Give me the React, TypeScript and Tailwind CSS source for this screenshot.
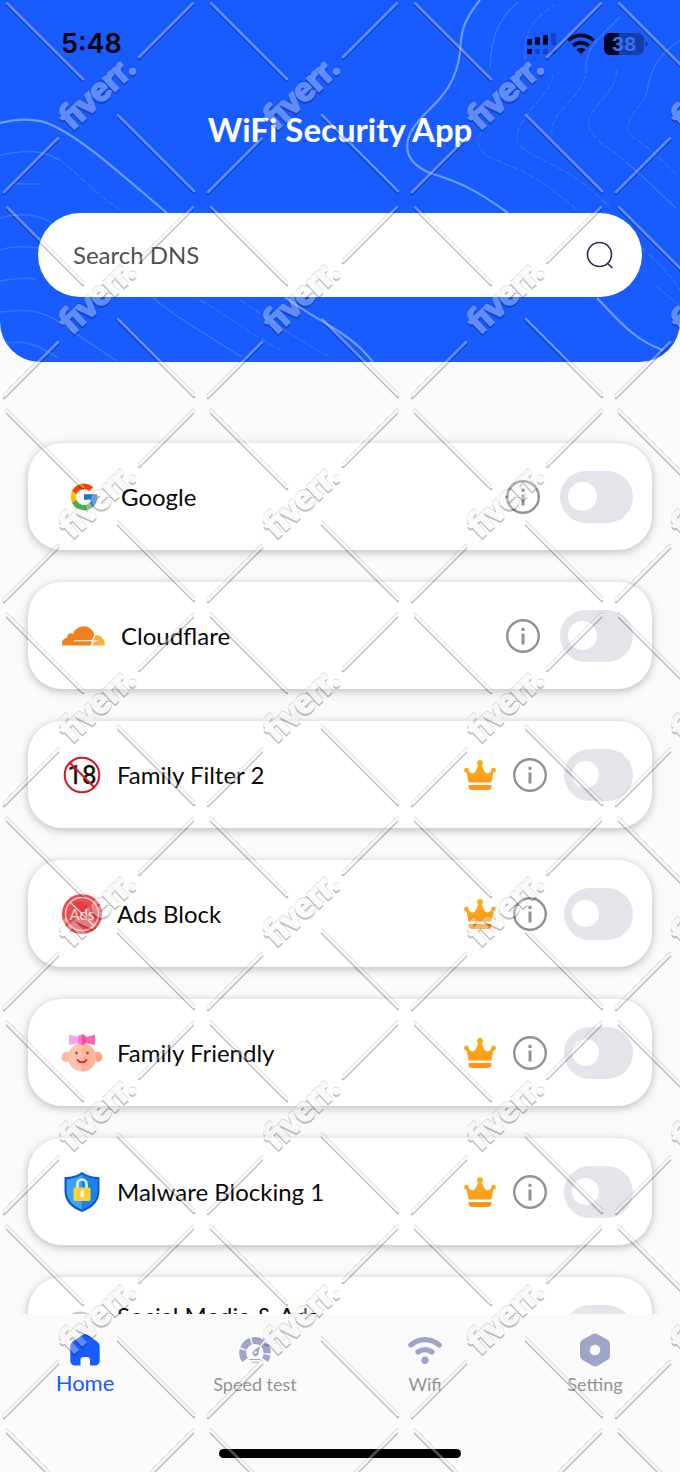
import type { ReactNode } from "react";
import { FcGoogle } from "react-icons/fc";

type Server = { id: string; name: string; icon: ReactNode; premium?: boolean };

function CloudflareIcon() {
  return (
    <svg viewBox="0 0 43 20" className="h-5 w-[43px]" aria-hidden="true">
      <path
        fill="#F38020"
        d="M0 19.500v-2.500c0-3 2.400-5 5.200-5-.5-3.600 3.200-5.800 6-4C12.500 3.500 17 .3 22 .3c5.200 0 9.300 3.600 10.300 8.400l-2.800 7-.8 3.800H0Z"
      />
      <path fill="#FAAE40" d="M33.500 9.200c5.500-.3 9.300 4 9.300 9.100l-.2 1.200H29.800l2-7.300 1.700-3Z" />
      <path fill="none" stroke="#fff" strokeWidth="1.100" d="M12 14.800h16.500c2 0 2.800-1.300 3.300-3M30 20l1.200-3.800c.3-1 .8-1.500 2-1.500h3" />
    </svg>
  );
}

function EighteenIcon() {
  return (
    <svg viewBox="0 0 40 40" className="size-10" aria-hidden="true">
      <text x="20" y="29" textAnchor="middle" fontSize="26" fontFamily="Roboto, sans-serif" fill="#111" stroke="#111" strokeWidth=".4">
        18
      </text>
      <circle cx="20" cy="20" r="17.300" fill="none" stroke="#D9141E" strokeWidth="2" />
      <path d="M8 8l24 24" stroke="#D9141E" strokeWidth="2" />
    </svg>
  );
}

function AdsIcon() {
  return (
    <svg viewBox="0 0 40 40" className="size-10" aria-hidden="true">
      <circle cx="20" cy="20" r="20" fill="#EC4C4F" />
      <path d="M11 8l8-1 6 4 8 7v12l-6 5-14-15Z" fill="#D9383D" opacity=".6" />
      <circle cx="20" cy="20" r="16.500" fill="none" stroke="#F9C9CA" strokeWidth="1.500" />
      <text x="20" y="25.500" textAnchor="middle" fontSize="15" fontFamily="Lato, sans-serif" fill="#FBDCDC">
        Ads
      </text>
      <path d="M8.500 8.500l23 23" stroke="#F9C9CA" strokeWidth="1.500" />
    </svg>
  );
}

function BabyIcon() {
  return (
    <svg viewBox="0 0 42 38" className="h-[38px] w-[42px] shrink-0" aria-hidden="true">
      <circle cx="5.500" cy="23" r="5" fill="#FFB69C" />
      <circle cx="36.500" cy="23" r="5" fill="#F7A488" />
      <circle cx="21" cy="23.500" r="14" fill="#FFC2AC" />
      <path d="M21 9.500a14 14 0 0 1 0 28Z" fill="#FDB49B" />
      <path d="M8 .5l10 3h3v5l-3 .5-10 2Z" fill="#F8A3EE" />
      <path d="M34 .5l-10 3h-3v5l3 .5 10 2Z" fill="#FF63AE" />
      <path d="M17 3.500c0-2 2-3 4-3V11c-2 0-4-1-4-3Z" fill="#F377D2" />
      <path d="M25 3.500c0-2-2-3-4-3V11c2 0 4-1 4-3Z" fill="#F54C9B" />
      <circle cx="15.500" cy="19" r="1.400" fill="#9C5B33" />
      <circle cx="26.500" cy="19" r="1.400" fill="#9C5B33" />
      <path d="M16.500 26c2 3 7 3 9 0" fill="none" stroke="#EE2430" strokeWidth="2" strokeLinecap="round" />
    </svg>
  );
}

function ShieldIcon() {
  return (
    <svg viewBox="0 0 40 40" className="size-10" aria-hidden="true">
      <path d="M20 0c5 3.800 11 4.800 17.500 5.200V19c0 10-6.500 17-17.500 21C9 36 2.500 29 2.500 19V5.200C9 4.800 15 3.800 20 0Z" fill="#0B57D0" />
      <path d="M20 2.500c4.500 3 9.500 4.200 15.300 4.700V19c0 8.500-5.500 14.700-15.300 18.500C10.200 33.700 4.700 27.500 4.700 19V7.200C10.500 6.700 15.500 5.500 20 2.500Z" fill="#3FA2F7" />
      <path d="M20 2.500c4.500 3 9.500 4.200 15.300 4.700V19c0 8.500-5.500 14.700-15.300 18.500Z" fill="#1E80EA" />
      <path d="M15.500 17v-5a4.500 4.500 0 0 1 9 0v5" fill="none" stroke="#E8F1FC" strokeWidth="2.600" />
      <rect x="11.500" y="15.500" width="17" height="13.500" rx="1.500" fill="#FFD232" />
      <circle cx="20" cy="20.500" r="2" fill="#fff" />
      <path d="M19 21h2l.5 4h-3Z" fill="#fff" />
    </svg>
  );
}

function SocialIcon() {
  return (
    <svg viewBox="0 0 40 40" className="size-10" aria-hidden="true">
      <circle cx="18" cy="20" r="18" fill="none" stroke="#C9C9CC" strokeWidth="3" />
    </svg>
  );
}

function CrownIcon() {
  return (
    <svg viewBox="0 0 32 30" className="h-[30px] w-8 shrink-0" role="img" aria-label="Premium">
      <defs>
        <linearGradient id="crown" x1="0" y1="0" x2="0" y2="1">
          <stop offset="0" stopColor="#FDB10F" />
          <stop offset="1" stopColor="#FC9A1C" />
        </linearGradient>
      </defs>
      <path
        fill="url(#crown)"
        d="M4.600 22.500 2.600 12.400A2.300 2.300 0 1 1 4.700 10.500c2 4 5.500 4 7.300 0l2.300-5a3 3 0 1 1 3.400 0L20 10.500c1.800 4 5.300 4 7.300 0a2.300 2.300 0 1 1 2.100 1.900L27.400 22.500Z"
      />
      <path fill="#FB961D" d="M4.600 25h22.800v1.500a3.500 3.500 0 0 1-3.500 3.500H8.100a3.500 3.500 0 0 1-3.500-3.500Z" />
    </svg>
  );
}

function InfoIcon() {
  return (
    <svg viewBox="0 0 34 34" className="size-[34px]" aria-hidden="true">
      <circle cx="17" cy="17" r="15.800" fill="none" stroke="#929292" strokeWidth="2.400" />
      <path d="M17 14.500v11M17 8.700v3.400" stroke="#929292" strokeWidth="3" />
    </svg>
  );
}

const SERVERS: Server[] = [
  { id: "google", name: "Google", icon: <FcGoogle className="size-8" aria-hidden="true" /> },
  { id: "cloudflare", name: "Cloudflare", icon: <CloudflareIcon /> },
  { id: "family-filter", name: "Family Filter 2", icon: <EighteenIcon />, premium: true },
  { id: "ads-block", name: "Ads Block", icon: <AdsIcon />, premium: true },
  { id: "family-friendly", name: "Family Friendly", icon: <BabyIcon />, premium: true },
  { id: "malware", name: "Malware Blocking 1", icon: <ShieldIcon />, premium: true },
  { id: "social", name: "Social Media & Ads Blocking", icon: <SocialIcon />, premium: true },
];

function ServerCard({ server }: { server: Server }) {
  const { id, name, icon, premium } = server;
  return (
    <li className="flex h-[107px] shrink-0 items-center rounded-[34px] bg-white pr-[19px] pl-[34px] shadow-[0_2px_10px_rgba(0,0,0,0.26)]">
      <span className={premium ? "flex w-10 shrink-0 justify-center" : "flex w-[43px] shrink-0 justify-center"}>{icon}</span>
      <label
        htmlFor={id}
        className={premium ? "ml-[15px] w-[230px] text-2xl leading-[30px]" : "ml-4 w-[230px] text-2xl leading-[30px]"}
      >
        {name}
      </label>
      <div className={premium ? "ml-auto flex items-center gap-[17px]" : "ml-auto flex items-center gap-5"}>
        {premium && <CrownIcon />}
        <button type="button" aria-label={`About ${name}`}>
          <InfoIcon />
        </button>
        <input
          id={id}
          type="checkbox"
          role="switch"
          className={
            premium
              ? "flex h-[52px] w-[69px] appearance-none items-center rounded-full bg-[#E5E4EA] pl-2 before:size-[27px] before:rounded-full before:bg-white checked:bg-[#185BFF]"
              : "flex h-[52px] w-[73px] appearance-none items-center rounded-full bg-[#E5E4EA] pl-2 before:size-[29px] before:rounded-full before:bg-white checked:bg-[#185BFF]"
          }
        />
      </div>
    </li>
  );
}

/** Topographic lines behind the header. */
function Contours() {
  return (
    <svg
      viewBox="0 0 680 362"
      preserveAspectRatio="none"
      className="absolute inset-0 size-full"
      fill="none"
      stroke="#8FB0FF"
      aria-hidden="true"
    >
      <g strokeWidth="2.200" opacity=".75">
        <path d="M0 123c16-4 36-6 54 3 32 16 62 44 113 87M285 297c18 14 40 25 56 36 15 10 22 17 32 29" />
        <path d="M480 0c-18 22-19 34-20 52-4 36-24 50-38 65-19 20-23 43 8 56 29 9 45 16 78 40M597 298c21 22 37 42 66 52" />
      </g>
      <g strokeWidth="1.500" opacity=".3">
        <path d="M0 155c25-5 40-6 60 5M0 312c30-4 45-2 70 18l47 31M0 344c22-4 35-2 58 14M152 297c25 21 55 38 90 60M15 184h25M0 218c20-6 40-3 52 5M0 250c15-5 25-3 40-2M0 281c12-2 24-4 36-2" />
        <path d="M518 2c-20 18-27 34-28 66M680 40c-30 20-30 40-34 55M628 164c16 12 30 28 48 44M586 67c0-20 14-30 34-50" />
      </g>
      <g strokeWidth="1.500" opacity=".22" strokeDasharray="7 2">
        <path d="M60 160c20 15 40 38 62 51M200 300c28 16 52 35 80 50M240 300c30 20 55 38 88 56" />
        <path d="M482 132c-12 22 12 26 26 33 26 10 45 24 70 46M553 75c-4 24-45 48-34 70 22 19 54 22 90 62M586 67c0 32-35 40-34 66M617 70c-2 28-36 40-27 60 10 16 24 20 38 34M525 60c0-30 6-40 30-55M646 95c-6 14-24 26-16 40 18 12 34 26 46 40M642 248c14 12 28 26 38 42M656 286l24 20" />
      </g>
    </svg>
  );
}

function StatusBar() {
  return (
    <div className="flex h-[87px] items-center justify-between pr-8 pl-[61px] text-black">
      <time className="font-[Inter,sans-serif] text-[27px] leading-8 font-semibold">5:48</time>
      <svg viewBox="0 0 121 24" className="h-6 w-[121px]" aria-hidden="true">
        <g fill="#020824">
          <rect y="7" width="5" height="6" rx="1" />
          <rect x="8" y="5" width="5" height="8" rx="1" />
          <rect x="16" y="3" width="5" height="10" rx="1" />
          <rect y="17" width="5" height="5" rx="1" />
          <g opacity=".25">
            <rect x="24" y="1" width="5" height="12" rx="1" />
            <rect x="8" y="17" width="5" height="5" rx="1" />
            <rect x="16" y="17" width="5" height="5" rx="1" />
            <rect x="24" y="17" width="5" height="5" rx="1" />
          </g>
        </g>
        <g fill="none" stroke="#020824" strokeWidth="3.800">
          <path d="M41.500 8.500a18 18 0 0 1 25 0" />
          <path d="M46.200 13.800a11.300 11.300 0 0 1 15.600 0" />
        </g>
        <path d="M49.500 17.500a7 7 0 0 1 9 0L54 22Z" fill="#020824" />
        <rect x="77" y="1" width="40" height="22" rx="6" fill="#143FA8" />
        <path d="M92 1v22h-9a6 6 0 0 1-6-6V7a6 6 0 0 1 6-6Z" fill="#020824" />
        <path d="M118.500 9c3 1 3 5 0 6Z" fill="#143FA8" />
        <text x="97" y="18.500" textAnchor="middle" fontSize="19" fontWeight="700" fontFamily="Inter, sans-serif" fill="#3C70F0">
          38
        </text>
      </svg>
    </div>
  );
}

function HomeIcon() {
  return (
    <svg viewBox="0 0 30 32" className="h-8 w-[30px]" aria-hidden="true">
      <path
        fill="#185BFF"
        d="M12 1.200a5.500 5.500 0 0 1 6 0l9.300 6.600A5.500 5.500 0 0 1 29.700 12.500V27a4.500 4.500 0 0 1-4.500 4.500H20V26a3 3 0 0 0-3-3h-3.500a3 3 0 0 0-3 3v5.500H4.800A4.500 4.500 0 0 1 .3 27V12.500a5.500 5.500 0 0 1 2.400-4.700Z"
      />
    </svg>
  );
}

function GaugeIcon() {
  return (
    <svg viewBox="0 0 32 32" className="size-8" aria-hidden="true">
      <path
        d="M6 26a12.300 12.300 0 1 1 20 0"
        fill="none"
        stroke="#9EA5C9"
        strokeWidth="7"
        strokeDasharray="10.500 1.500"
      />
      <path d="M21 12l-1.500 7.500a3 3 0 1 1-5-2.500Z" fill="#9EA5C9" />
      <circle cx="16.500" cy="18.500" r="1.300" fill="#FAFAFA" />
      <path d="M10.500 25.500h11M12.500 28.200h7" stroke="#9EA5C9" strokeWidth="1" />
    </svg>
  );
}

function WifiIcon() {
  return (
    <svg viewBox="0 0 34 28" className="h-7 w-[34px]" aria-hidden="true">
      <g fill="none" stroke="#9EA5C9" strokeWidth="5.200" strokeLinecap="round">
        <path d="M2.800 9c8.300-7.300 20.100-7.300 28.400 0" />
        <path d="M10 16c4.300-3 9.700-3 14 0" />
      </g>
      <circle cx="17" cy="24.200" r="3.700" fill="#9EA5C9" />
    </svg>
  );
}

function SettingIcon() {
  return (
    <svg viewBox="0 0 30 34" className="h-[34px] w-[30px]" aria-hidden="true">
      <path
        fill="#9EA5C9"
        fillRule="evenodd"
        d="M12.500 1.200a5 5 0 0 1 5 0l10 5.600A5 5 0 0 1 30 11.200v11.600a5 5 0 0 1-2.500 4.300l-10 5.700a5 5 0 0 1-5 0l-10-5.700A5 5 0 0 1 0 22.800V11.200a5 5 0 0 1 2.500-4.400ZM15 11.700a5.300 5.300 0 1 0 0 10.600 5.300 5.300 0 0 0 0-10.600Z"
      />
    </svg>
  );
}

const TABS = [
  { label: "Home", icon: <HomeIcon />, active: true },
  { label: "Speed test", icon: <GaugeIcon />, active: false },
  { label: "Wifi", icon: <WifiIcon />, active: false },
  { label: "Setting", icon: <SettingIcon />, active: false },
];

function TabBar() {
  return (
    <nav className="flex h-[158px] shrink-0 flex-col items-center justify-between bg-[#FAFAFA] pt-[19px] pb-3.5">
      <div className="grid w-full grid-cols-4">
        {TABS.map((tab) => (
          <a key={tab.label} href="#" className="flex flex-col items-center gap-[3px]">
            <span className="flex h-[34px] items-center">{tab.icon}</span>
            <span className={tab.active ? "text-[22px] leading-[26px] text-[#185BFF]" : "text-lg leading-7 text-[#949494]"}>
              {tab.label}
            </span>
          </a>
        ))}
      </div>
      <div className="h-[9px] w-[242px] rounded-full bg-black" />
    </nav>
  );
}

/** Repeating embossed mark over the whole screen; the shadow is cut out under the mark itself. */
function Watermark() {
  return (
    <svg className="pointer-events-none absolute inset-0 size-full" aria-hidden="true">
      <defs>
        <g id="mark" fill="currentColor" stroke="currentColor" strokeLinecap="round">
          <path strokeWidth="2.600" d="M7 3l76 76M139 57l54-54M4 192l54-54M118 115l76 76" />
          <text transform="translate(72 131) rotate(-43)" fontFamily="Lato, sans-serif" fontWeight="900" fontSize="34" strokeWidth="2">
            fiverr.
          </text>
        </g>
        <mask id="cut" maskUnits="userSpaceOnUse" x="0" y="0" width="204" height="204">
          <rect width="204" height="204" fill="#fff" />
          <use href="#mark" color="#000" />
        </mask>
        <pattern id="tile" width="204" height="204" patternUnits="userSpaceOnUse">
          <g mask="url(#cut)">
            <use href="#mark" y="2" color="#000" opacity=".26" />
            <use href="#mark" y="-1" color="#000" opacity=".16" />
          </g>
          <use href="#mark" color="#F0F0F0" opacity=".33" />
        </pattern>
      </defs>
      <rect width="100%" height="100%" fill="url(#tile)" />
    </svg>
  );
}

export default function App() {
  return (
    <div className="relative flex h-screen flex-col overflow-hidden bg-[#FAFAFA] font-[Lato,sans-serif] text-[#0A0A0A]">
      <header className="relative shrink-0 overflow-hidden rounded-b-[40px] bg-[#185BFF] pb-[65px]">
        <Contours />
        <div className="relative">
          <StatusBar />
          <h1 className="mt-5 text-center text-[33px] leading-[44px] font-bold text-white">WiFi Security App</h1>
          <form className="mx-[38px] mt-[62px] flex h-[84px] items-center rounded-full bg-white pr-7 pl-[35px]">
            <input
              type="search"
              aria-label="Search DNS"
              placeholder="Search DNS"
              className="min-w-0 flex-1 text-2xl text-[#505050] outline-none placeholder:text-[#505050]"
            />
            <button type="button" aria-label="Search">
              <svg viewBox="0 0 28 28" className="size-7" fill="none" stroke="#2B2B50" strokeWidth="1.600" strokeLinecap="round" aria-hidden="true">
                <circle cx="13.500" cy="13.500" r="12" />
                <path d="M21.500 22.500l4.500 4" />
              </svg>
            </button>
          </form>
        </div>
      </header>
      <main className="min-h-0 flex-1 overflow-hidden">
        <ul className="flex flex-col gap-8 px-7 pt-[81px]">
          {SERVERS.map((server) => (
            <ServerCard key={server.id} server={server} />
          ))}
        </ul>
      </main>
      <TabBar />
      <Watermark />
    </div>
  );
}
